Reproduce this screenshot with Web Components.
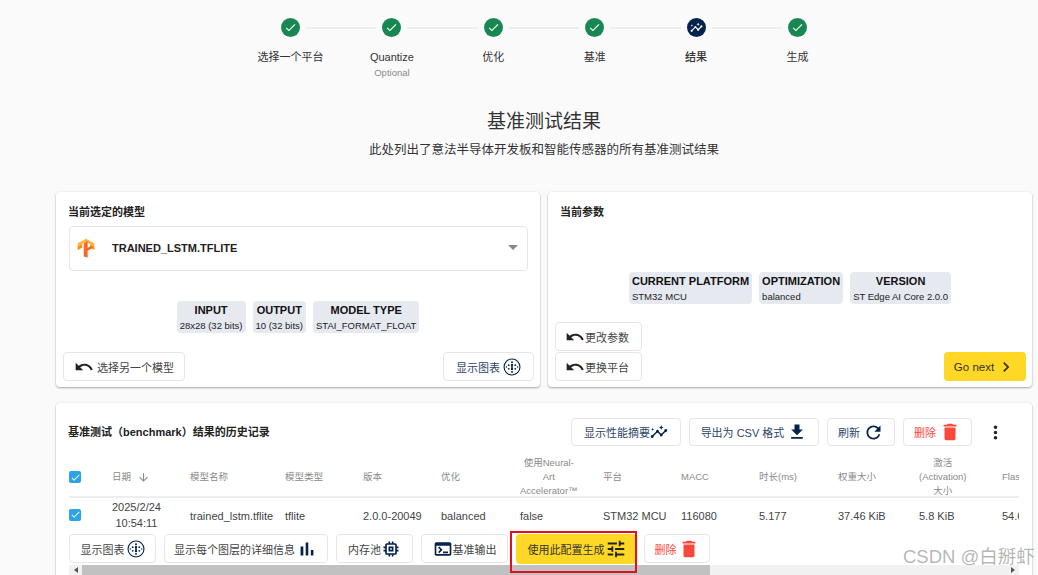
<!DOCTYPE html>
<html lang="zh"><head><meta charset="utf-8"><title>基准测试结果</title>
<style>
html,body{margin:0;height:575px;overflow:hidden;background:#fafafa}
body{font-family:"Liberation Sans","Noto Sans CJK SC",sans-serif;font-size:11px;color:#333}
x-app{display:block}
</style></head><body>
<x-app></x-app>
<script>
const P={
check:'<path d="M9 16.17L4.83 12l-1.42 1.41L9 19 21 7l-1.41-1.41z"/>',
undo:'<path d="M12.5 8c-2.65 0-5.05.99-6.9 2.6L2 7v9h9l-3.62-3.62c1.39-1.16 3.16-1.88 5.12-1.88 3.54 0 6.55 2.31 7.6 5.5l2.37-.78C21.08 11.03 17.15 8 12.5 8z"/>',
chev:'<path d="M10 6L8.59 7.41 13.17 12l-4.58 4.59L10 18l6-6z"/>',
download:'<path d="M19 9h-4V3H9v6H5l7 7 7-7zM5 18v2h14v-2H5z"/>',
refresh:'<path d="M17.65 6.35C16.2 4.9 14.21 4 12 4c-4.42 0-7.99 3.58-7.99 8s3.57 8 7.99 8c3.73 0 6.84-2.55 7.73-6h-2.08c-.82 2.33-3.04 4-5.65 4-3.31 0-6-2.69-6-6s2.69-6 6-6c1.66 0 3.14.69 4.22 1.78L13 11h7V4l-2.35 2.35z"/>',
del:'<path d="M6 19c0 1.1.9 2 2 2h8c1.1 0 2-.9 2-2V7H6v12zM19 4h-3.5l-1-1h-5l-1 1H5v2h14V4z"/>',
more:'<path d="M12 8c1.1 0 2-.9 2-2s-.9-2-2-2-2 .9-2 2 .9 2 2 2zm0 2c-1.1 0-2 .9-2 2s.9 2 2 2 2-.9 2-2-.9-2-2-2zm0 6c-1.1 0-2 .9-2 2s.9 2 2 2 2-.9 2-2-.9-2-2-2z"/>',
down:'<path d="M20 12l-1.41-1.41L13 16.17V4h-2v12.17l-5.58-5.59L4 12l8 8 8-8z"/>',
insights:'<path d="M21 8c-1.45 0-2.26 1.44-1.93 2.51l-3.55 3.56c-.3-.09-.74-.09-1.04 0l-2.55-2.55C12.27 10.45 11.46 9 10 9c-1.45 0-2.27 1.44-1.93 2.52l-4.56 4.55C2.44 15.74 1 16.55 1 18c0 1.1.9 2 2 2 1.45 0 2.26-1.44 1.93-2.51l4.55-4.56c.3.09.74.09 1.04 0l2.55 2.55C12.73 16.55 13.54 18 15 18c1.45 0 2.27-1.44 1.93-2.52l3.56-3.55c1.07.33 2.51-.48 2.51-1.93 0-1.1-.9-2-2-2z"/><path d="M15 9l.94-2.07L18 6l-2.06-.93L15 3l-.92 2.07L12 6l2.08.93zM3.5 11L4 9l2-.5L4 8l-.5-2L3 8l-2 .5L3 9z"/>',
bars:'<path d="M5 9.2h3V19H5zM10.6 5h2.8v14h-2.8zm5.6 8H19v6h-2.8z"/>',
chip:'<path d="M15 9H9v6h6V9zm-2 4h-2v-2h2v2zm8-2V9h-2V7c0-1.1-.9-2-2-2h-2V3h-2v2h-2V3H9v2H7c-1.1 0-2 .9-2 2v2H3v2h2v2H3v2h2v2c0 1.1.9 2 2 2h2v2h2v-2h2v2h2v-2h2c1.1 0 2-.9 2-2v-2h2v-2h-2v-2h2zm-4 6H7V7h10v10z"/>',
term:'<path d="M20 4H4c-1.11 0-2 .9-2 2v12c0 1.1.89 2 2 2h16c1.1 0 2-.9 2-2V6c0-1.1-.9-2-2-2zm0 14H4V8h16v10zm-2-1h-6v-2h6v2zM7.5 17l-1.41-1.41L8.67 13l-2.59-2.59L7.5 9l4 4-4 4z"/>',
tune:'<path d="M3 17v2h6v-2H3zM3 5v2h10V5H3zm10 16v-2h8v-2h-8v-2h-2v6h2zM7 9v2H3v2h4v2h2V9H7zm14 4v-2H11v2h10zm-6-4h2V7h4V5h-4V3h-2v6z"/>',
graph:'<circle cx="12" cy="12" r="10.6" fill="none" stroke="currentColor" stroke-width="1.5"/><circle cx="12" cy="5.5" r="1.3"/><circle cx="12" cy="9.3" r="1.6"/><circle cx="12" cy="14.7" r="1.6"/><circle cx="12" cy="18.5" r="1.3"/><circle cx="12" cy="12" r="1.3"/><circle cx="7.6" cy="9.6" r="1.2"/><circle cx="7.6" cy="14.4" r="1.2"/><circle cx="16.4" cy="9.6" r="1.2"/><circle cx="16.4" cy="14.4" r="1.2"/><circle cx="4.5" cy="12" r="1"/><circle cx="19.5" cy="12" r="1"/>',
tf:'<path fill="#ffb13b" d="M12 1 2 6.6v3.6l10-5.6 10 5.6V6.6z"/><path fill="#ff8f00" d="M2 10.2v4.4l5.5-3.1V7.1zM22 10.2v4.2l-5-2.8V7.4z"/><path fill="#f4692a" d="M9.3 6.2v16l4.7 1.3V15.3l4.5-2.5V9.3L14 11.8V3.6z"/>'
};
class XIcon extends HTMLElement{connectedCallback(){
 const s=this.getAttribute('size')||14;
 this.attachShadow({mode:'open'}).innerHTML=`<style>:host{display:inline-flex;flex:none;width:${s}px;height:${s}px;color:inherit}svg{width:100%;height:100%;fill:currentColor;display:block}</style><svg viewBox="0 0 24 24">${P[this.getAttribute('name')]}</svg>`;
}}
customElements.define('x-icon',XIcon);

class XStep extends HTMLElement{connectedCallback(){
 const active=this.hasAttribute('active'),sub=this.getAttribute('sub');
 this.attachShadow({mode:'open'}).innerHTML=`<style>
 :host{display:flex;flex-direction:column;align-items:center;width:101.4px;flex:none}
 .row{display:flex;align-items:center;width:100%;height:19px;gap:6px}
 .l{flex:1;height:2px;background:#eeeeee}.l.no{visibility:hidden}
 .c{width:19px;height:19px;border-radius:50%;background:${active?'#03234b':'#198754'};color:#fff;display:flex;align-items:center;justify-content:center;flex:none}
 .t{margin-top:12px;font-size:11px;line-height:16px;color:#333;${active?'font-weight:500;':''}}
 .s{font-size:9.5px;line-height:13px;color:#8a8a8a;margin-top:1px}
 </style><div class="row"><span class="l ${this.hasAttribute('first')?'no':''}"></span><span class="c"><x-icon name="${active?'insights':'check'}" size="13"></x-icon></span><span class="l ${this.hasAttribute('last')?'no':''}"></span></div><div class="t"><slot></slot></div>${sub?`<div class="s">${sub}</div>`:''}`;
}}
customElements.define('x-step',XStep);

class XStepper extends HTMLElement{constructor(){super();this.attachShadow({mode:'open'}).innerHTML=`<style>:host{display:flex;justify-content:center;padding:18px 6px 0 56px;height:66px}</style><slot></slot>`}}
customElements.define('x-stepper',XStepper);

class XHeading extends HTMLElement{constructor(){super();this.attachShadow({mode:'open'}).innerHTML=`<style>:host{display:block;text-align:center;padding:24px 6px 0 56px;height:108px;box-sizing:border-box}
 h1{margin:0;font-size:19px;font-weight:400;line-height:28px;color:#333}p{margin:4px 0 0;font-size:12.5px;line-height:20px;color:#333}</style><h1><slot name="t"></slot></h1><p><slot name="s"></slot></p>`}}
customElements.define('x-heading',XHeading);

class XCard extends HTMLElement{constructor(){super();this.attachShadow({mode:'open'}).innerHTML=`<style>:host{display:flex;flex-direction:column;background:#fff;border-radius:4px;box-shadow:0 1px 2px rgba(0,0,0,.32),0 0 3px rgba(0,0,0,.05);box-sizing:border-box;min-width:0}
 .t{font-size:11px;font-weight:700;line-height:16px;color:#222;padding:12px 12px 0}
 .t:not(.on){display:none}
 </style><div class="t"><slot name="title"></slot></div><slot></slot>`;}
 connectedCallback(){ if(this.hasAttribute('titled')) this.shadowRoot.querySelector('.t').classList.add('on'); }
}
customElements.define('x-card',XCard);

class XChip extends HTMLElement{connectedCallback(){
 this.attachShadow({mode:'open'}).innerHTML=`<style>:host{display:inline-block;background:#e6e9f0;border-radius:4px;padding:2px 3px 0;height:32px;box-sizing:border-box;white-space:nowrap}
 .a{font-size:11px;font-weight:700;line-height:15px;color:#111;text-align:center}.b{font-size:9.5px;line-height:13px;margin-top:1px;color:#222}</style><div class="a">${this.getAttribute('label')}</div><div class="b"><slot></slot></div>`;
}}
customElements.define('x-chip',XChip);

class XChips extends HTMLElement{constructor(){super();this.attachShadow({mode:'open'}).innerHTML=`<style>:host{display:flex;justify-content:center;gap:7px}</style><slot></slot>`}}
customElements.define('x-chips',XChips);

class XBtn extends HTMLElement{connectedCallback(){
 const v=this.getAttribute('variant')||'',w=this.getAttribute('w');
 const c={dark:'#444',navy:'#2d4467',red:'#f9483c',yellow:'#333'}[v]||'#2d4467';
 this.attachShadow({mode:'open'}).innerHTML=`<style>:host{display:inline-flex;align-items:center;justify-content:center;gap:${this.getAttribute('gap')||4}px;box-sizing:border-box;height:${this.getAttribute('h')||29}px;${w?`width:${w}px;`:''}flex:none;font-size:11px;color:${c};background:${v=='yellow'?'#ffd826':'#fff'};border:${v=='yellow'?'0':'1px solid #e6e6e6'};border-radius:4px;white-space:nowrap}</style><slot></slot>`;
}}
customElements.define('x-btn',XBtn);

class XCheck extends HTMLElement{constructor(){super();this.attachShadow({mode:'open'}).innerHTML=`<style>:host{display:inline-flex;width:12px;height:12px;border-radius:2px;background:#2aa4e4;color:#fff;align-items:center;justify-content:center}</style><x-icon name="check" size="11"></x-icon>`}}
customElements.define('x-check',XCheck);

class XSelect extends HTMLElement{constructor(){super();this.attachShadow({mode:'open'}).innerHTML=`<style>:host{display:flex;align-items:center;height:45px;box-sizing:border-box;margin:6px 12px 0 13px;border:1px solid #e6e6e6;border-radius:4px;padding:0 9px 2px 6px;gap:16px}
 .v{flex:1;font-weight:700;font-size:11px;color:#222}.a{width:0;height:0;border:5px solid transparent;border-top-color:#888;border-bottom:0;margin-bottom:1px}</style><x-icon name="tf" size="20"></x-icon><div class="v"><slot></slot></div><span class="a"></span>`}}
customElements.define('x-select',XSelect);

class XTable extends HTMLElement{constructor(){super();const cols='43px 78px 95px 78px 78px 79px 83px 78px 78px 79px 81px 83px 60px';
 this.attachShadow({mode:'open'}).innerHTML=`<style>:host{display:block;width:950px;margin:8px 13px 0 13px;overflow:hidden;position:relative}
 .h,.r{display:grid;grid-template-columns:${cols};align-items:center;width:1014px}
 .h{height:44px;padding-top:2px;color:#8a8a8a;font-size:9.5px;line-height:14px;border-bottom:2px solid #eee;box-sizing:border-box}
 .h x-check{margin-top:4px}
 .r{height:36px;color:#444;font-size:11px;line-height:16px;white-space:nowrap}
 .wrap{display:inline-block;text-align:center}
 .date{margin-top:-2px}
 .d{display:inline-flex;align-items:center;gap:6px}
 .actions{display:flex;gap:8px;height:31px;box-sizing:border-box;align-items:flex-start}
 .bar{display:flex;align-items:center;height:10px;background:#f1f1f1;position:relative}
 .ar{width:13px;flex:none;display:flex;justify-content:center}
 .tl{border:3px solid transparent;border-right:4px solid #555;border-left:0;width:0;height:0}
 .tr{border:3px solid transparent;border-left:4px solid #555;border-right:0;width:0;height:0}
 .th{width:628px;height:10px;background:#c1c1c1}.sp{flex:1}
 </style>
 <div class="h"><div><x-check></x-check></div><div class="d">日期 <x-icon name="down" size="13"></x-icon></div><div>模型名称</div><div>模型类型</div><div>版本</div><div>优化</div><div><span class="wrap">使用Neural-<br>Art<br>Accelerator™</span></div><div>平台</div><div>MACC</div><div>时长(ms)</div><div>权重大小</div><div><span class="wrap">激活<br>(Activation)<br>大小</span></div><div>Flash</div></div>
 <div class="r"><div><x-check></x-check></div><div class="date"><span class="wrap">2025/2/24<br>10:54:11</span></div><div>trained_lstm.tflite</div><div>tflite</div><div>2.0.0-20049</div><div>balanced</div><div>false</div><div>STM32 MCU</div><div>116080</div><div>5.177</div><div>37.46 KiB</div><div>5.8 KiB</div><div>54.61 KiB</div></div>
 <div class="actions"><slot></slot></div>
 <div class="bar"><span class="ar"><i class="tl"></i></span><span class="th"></span><span class="sp"></span><span class="ar"><i class="tr"></i></span></div>`;}}
customElements.define('x-table',XTable);

class XApp extends HTMLElement{constructor(){super();this.attachShadow({mode:'open'}).innerHTML=`<style>
 :host{display:block;position:relative;height:575px;overflow:hidden}
 .grid{display:grid;grid-template-columns:484px 484px;gap:8px;padding:0 6px 0 56px;}
 .grid x-card{height:195px}
 x-chips.c1{margin-top:30px}x-chips.c2{margin-top:52px}
 .foot{display:flex;justify-content:space-between;align-items:flex-end;margin-top:auto;padding:0 6px 6px 7px}
 .stack{display:flex;flex-direction:column;gap:1px}
 .hist{margin:16px 6px 0 56px;height:200px}
 .top{display:flex;align-items:center;height:28px;margin-top:15px;padding:0 0 0 12px;position:relative}
 .hist-t{flex:1;font-weight:700;font-size:11px;color:#222;padding-bottom:2px}
 .tools{display:flex;gap:8px;align-items:center}
 .kebab{color:#222;margin:0 26px 0 13px;display:flex}
 .mark{position:absolute;left:510px;top:531px;width:127px;height:42px;box-sizing:border-box;border:2px solid #e30f1f;pointer-events:none}
 .wm{position:absolute;left:903px;top:546px;font-size:18.5px;line-height:22px;color:rgba(120,120,120,.55);white-space:nowrap;pointer-events:none}
 </style>
 <x-stepper>
  <x-step first>选择一个平台</x-step><x-step sub="Optional">Quantize</x-step><x-step>优化</x-step><x-step>基准</x-step><x-step active>结果</x-step><x-step last>生成</x-step>
 </x-stepper>
 <x-heading><span slot="t">基准测试结果</span><span slot="s">此处列出了意法半导体开发板和智能传感器的所有基准测试结果</span></x-heading>
 <div class="grid">
  <x-card titled><span slot="title">当前选定的模型</span>
   <x-select>TRAINED_LSTM.TFLITE</x-select>
   <x-chips class="c1"><x-chip label="INPUT">28x28 (32 bits)</x-chip><x-chip label="OUTPUT">10 (32 bits)</x-chip><x-chip label="MODEL TYPE">STAI_FORMAT_FLOAT</x-chip></x-chips>
   <div class="foot"><x-btn variant="dark" w="122" gap="3"><x-icon name="undo" size="20" style="color:#222"></x-icon>选择另一个模型</x-btn><x-btn w="91" gap="3">显示图表<x-icon name="graph" size="18" style="color:#03234b"></x-icon></x-btn></div>
  </x-card>
  <x-card titled><span slot="title">当前参数</span>
   <x-chips class="c2"><x-chip label="CURRENT PLATFORM">STM32 MCU</x-chip><x-chip label="OPTIMIZATION">balanced</x-chip><x-chip label="VERSION">ST Edge AI Core 2.0.0</x-chip></x-chips>
   <div class="foot"><div class="stack"><x-btn variant="dark" w="87" gap="0" style="padding-right:3px"><x-icon name="undo" size="20" style="color:#222"></x-icon>更改参数</x-btn><x-btn variant="dark" w="87" gap="0" style="padding-right:3px"><x-icon name="undo" size="20" style="color:#222"></x-icon>更换平台</x-btn></div>
   <x-btn variant="yellow" w="82" gap="2"><span style="font-size:11.5px">Go next</span><x-icon name="chev" size="20"></x-icon></x-btn></div>
  </x-card>
 </div>
 <div class="hist"><x-card style="height:200px">
  <div class="top"><span class="hist-t">基准测试（benchmark）结果的历史记录</span>
   <div class="tools"><x-btn w="110" h="28" gap="0">显示性能摘要<x-icon name="insights" size="18" style="color:#03234b"></x-icon></x-btn><x-btn w="130" h="28" gap="3">导出为 CSV 格式<x-icon name="download" size="20" style="color:#03234b"></x-icon></x-btn><x-btn w="68" h="28" gap="3">刷新<x-icon name="refresh" size="21" style="color:#03234b"></x-icon></x-btn><x-btn variant="red" w="69" h="28" gap="3">删除<x-icon name="del" size="22"></x-icon></x-btn></div>
   <span class="kebab"><x-icon name="more" size="21"></x-icon></span></div>
  <x-table>
   <x-btn variant="dark" w="87" h="29" gap="2">显示图表<x-icon name="graph" size="18" style="color:#03234b"></x-icon></x-btn>
   <x-btn variant="dark" w="164" h="29" gap="1">显示每个图层的详细信息<x-icon name="bars" size="22" style="color:#03234b"></x-icon></x-btn>
   <x-btn variant="dark" w="77" h="29" gap="0">内存池<x-icon name="chip" size="20" style="color:#03234b"></x-icon></x-btn>
   <x-btn variant="dark" w="87" h="29" gap="0"><x-icon name="term" size="20" style="color:#03234b"></x-icon>基准输出</x-btn>
   <x-btn variant="yellow" w="120" h="30" gap="0" style="padding-left:2px">使用此配置生成<x-icon name="tune" size="22" style="color:#222"></x-icon></x-btn>
   <x-btn variant="red" w="66" h="29" gap="1">删除<x-icon name="del" size="22"></x-icon></x-btn>
  </x-table>
 </x-card></div>
 <div class="mark"></div>
 <div class="wm">CSDN @白掰虾</div>`}}
customElements.define('x-app',XApp);
</script>
</body></html>
